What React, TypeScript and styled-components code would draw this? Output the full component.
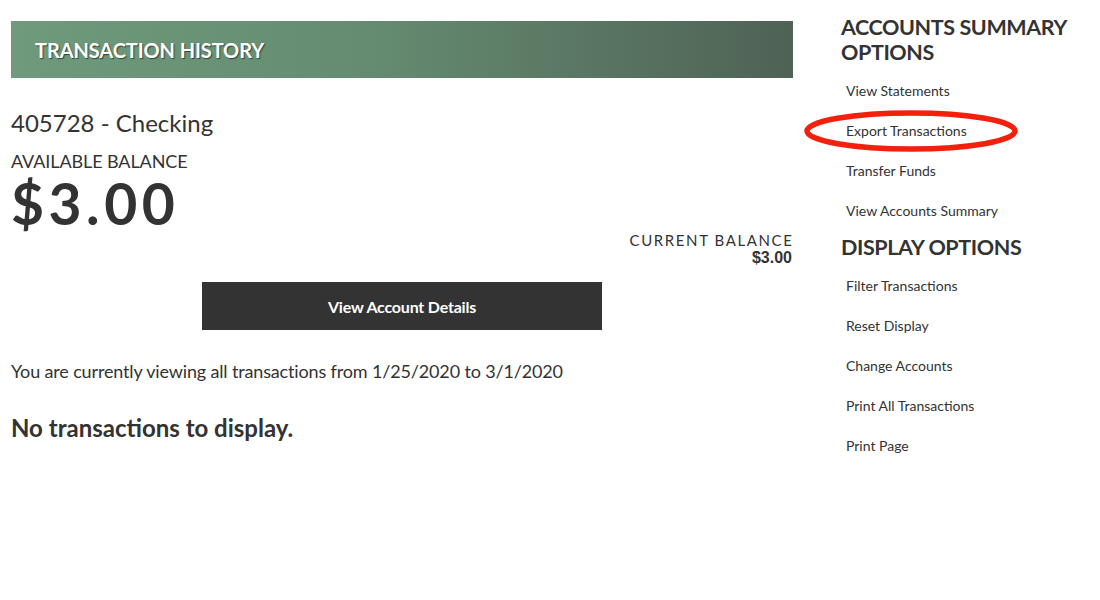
import React from "react";
import styled, { createGlobalStyle } from "styled-components";

const Global = createGlobalStyle`
  html, body { margin: 0; padding: 0; background: #fff; }
  body { font-family: Lato, "Open Sans", sans-serif; color: #333; }
`;

const Page = styled.div`
  display: flex;
  align-items: flex-start;
  padding: 21px 0 0 11px;
  width: 1100px;
  box-sizing: border-box;
`;

const Main = styled.main`
  width: 782px;
  display: flex;
  flex-direction: column;
`;

const Banner = styled.div`
  height: 57px;
  display: flex;
  align-items: center;
  padding-left: 24px;
  background: linear-gradient(90deg, #6f9a7c 0%, #658c71 45%, #4f6255 100%);
  color: #fff;
  font-size: 20px;
  font-weight: 700;
  letter-spacing: -0.1px;
  text-shadow: 1px 1px 1px rgba(0, 0, 0, 0.55);
`;

const AccountName = styled.div`
  margin-top: 31px;
  font-size: 24px;
  line-height: 28px;
  color: #333;
`;

const AvailLabel = styled.div`
  margin-top: 14px;
  font-size: 18px;
  line-height: 20px;
  letter-spacing: -0.1px;
`;

const AvailAmount = styled.div`
  font-size: 57px;
  font-weight: 700;
  line-height: 56px;
  margin-top: 4px;
  letter-spacing: 4.5px;
  color: #333;
`;

const CurrentBox = styled.div`
  align-self: flex-end;
  text-align: right;
  margin-top: 1px;
  margin-right: 1px;
`;

const CurrentLabel = styled.div`
  font-size: 15px;
  line-height: 17px;
  letter-spacing: 1.6px;
  margin-right: -1.5px;
`;

const CurrentAmount = styled.div`
  font-family: "Liberation Sans", Arial, sans-serif;
  font-weight: 700;
  font-size: 16px;
  line-height: 18px;
`;

const DetailsButton = styled.button`
  align-self: center;
  width: 400px;
  height: 48px;
  margin-top: 15px;
  background: #333;
  color: #fff;
  border: 0;
  font-family: Lato, sans-serif;
  font-weight: 700;
  font-size: 16px;
  letter-spacing: -0.2px;
`;

const RangeText = styled.p`
  margin: 30px 0 0;
  font-size: 18px;
  line-height: 22px;
  letter-spacing: -0.15px;
`;

const EmptyText = styled.h3`
  margin: 32px 0 0;
  font-size: 24px;
  font-weight: 700;
  line-height: 28px;
`;

const Sidebar = styled.aside`
  margin-left: 48px;
  margin-top: -6px;
  width: 240px;
  display: flex;
  flex-direction: column;
`;

const SideHeading = styled.h2<{ $top?: number }>`
  margin: ${(p) => p.$top ?? 0}px 0 0;
  font-size: 21.5px;
  font-weight: 700;
  line-height: 25px;
  letter-spacing: -0.4px;
  color: #333;
`;

const LinkList = styled.ul<{ $top: number }>`
  list-style: none;
  margin: ${(p) => p.$top}px 0 0;
  padding: 0;
`;

const LinkItem = styled.li`
  position: relative;
  height: 40px;
  display: flex;
  align-items: center;
  padding-left: 5px;
  font-size: 14px;
  color: #333;
`;

const Ring = styled.svg`
  position: absolute;
  left: -37px;
  top: 0px;
  overflow: visible;
  pointer-events: none;
`;

const summaryLinks = [
  "View Statements",
  "Export Transactions",
  "Transfer Funds",
  "View Accounts Summary",
];
const displayLinks = [
  "Filter Transactions",
  "Reset Display",
  "Change Accounts",
  "Print All Transactions",
  "Print Page",
];

export default function App() {
  return (
    <>
      <Global />
      <Page>
        <Main>
          <Banner>TRANSACTION HISTORY</Banner>
          <AccountName>405728 - Checking</AccountName>
          <AvailLabel>AVAILABLE BALANCE</AvailLabel>
          <AvailAmount>$3.00</AvailAmount>
          <CurrentBox>
            <CurrentLabel>CURRENT BALANCE</CurrentLabel>
            <CurrentAmount>$3.00</CurrentAmount>
          </CurrentBox>
          <DetailsButton>View Account Details</DetailsButton>
          <RangeText>
            You are currently viewing all transactions from 1/25/2020 to 3/1/2020
          </RangeText>
          <EmptyText>No transactions to display.</EmptyText>
        </Main>
        <Sidebar>
          <SideHeading>
            ACCOUNTS SUMMARY
            <br />
            OPTIONS
          </SideHeading>
          <LinkList $top={5}>
            {summaryLinks.map((l) => (
              <LinkItem key={l}>
                {l}
                {l === "Export Transactions" && (
                  <Ring width="216" height="42" viewBox="0 0 216 42">
                    <ellipse
                      cx="107"
                      cy="21"
                      rx="104"
                      ry="18"
                      fill="none"
                      stroke="#f2200d"
                      strokeWidth="5.5"
                    />
                  </Ring>
                )}
              </LinkItem>
            ))}
          </LinkList>
          <SideHeading $top={5}>DISPLAY OPTIONS</SideHeading>
          <LinkList $top={5}>
            {displayLinks.map((l) => (
              <LinkItem key={l}>{l}</LinkItem>
            ))}
          </LinkList>
        </Sidebar>
      </Page>
    </>
  );
}
